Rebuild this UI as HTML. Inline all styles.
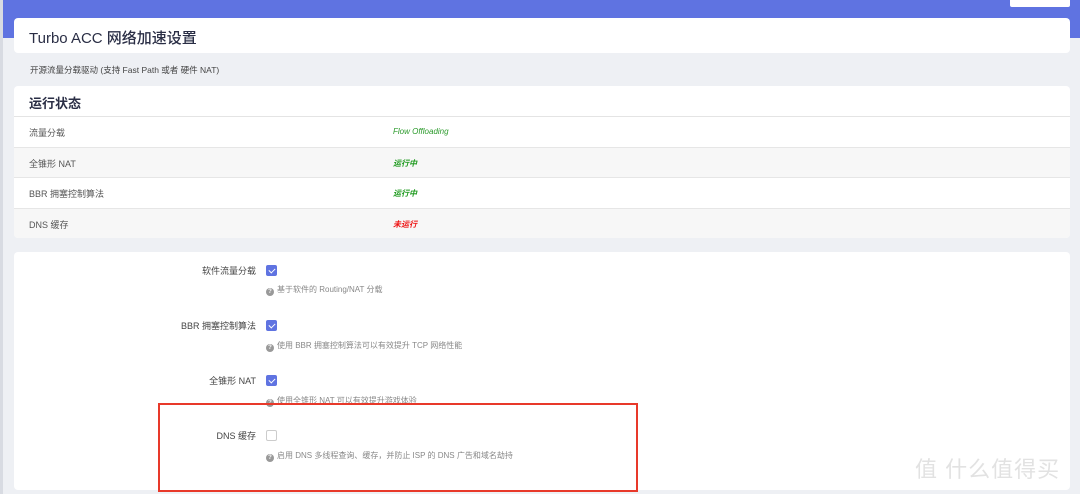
<!DOCTYPE html>
<html><head><meta charset="utf-8"><style>
*{margin:0;padding:0;box-sizing:border-box}
body{width:1080px;height:494px;background:#eef0f4;font-family:"Liberation Sans","Noto Sans CJK SC",sans-serif;position:relative;overflow:hidden;color:#333}
.hdr{position:absolute;left:0;top:0;width:1080px;height:38px;background:#5f73e1}
.lstrip{position:absolute;left:0;top:0;width:3px;height:494px;background:#d8dbe2}
.btn{position:absolute;left:1010px;top:-3px;width:60px;height:10px;background:#fff;border-radius:2px}
.card{position:absolute;left:14px;width:1056px;background:#fff;border-radius:4px}
.t1{top:18px;height:35px;font-size:15px;color:#2a2e45;padding:9px 15px;font-weight:500}
.sub{position:absolute;left:30px;top:64px;font-size:8.5px;color:#444}
.st{top:86px;height:152px;overflow:hidden}
.st h2{font-size:13px;color:#2a2e45;padding:7px 15px;height:31px;border-bottom:1px solid #e4e4e4}
.row{height:30.5px;border-bottom:1px solid #e6e6e6;font-size:9px;color:#555;position:relative;padding:9px 15px}
.row.g{background:#f7f7f7}
.row i{position:absolute;left:379px;top:10px;font-size:8px;font-weight:bold}
.set{top:252px;height:238px}
.lab{position:absolute;font-size:9px;color:#444;right:814px;text-align:right;white-space:nowrap}
.cb{position:absolute;left:252px;width:11px;height:11px;border-radius:2px;background:#5f73e1}
.cb:after{content:"";position:absolute;left:3.5px;top:1.5px;width:3px;height:5px;border:solid #fff;border-width:0 1.5px 1.5px 0;transform:rotate(45deg)}
.cb.off{background:#fff;border:1px solid #ccc}.cb.off:after{display:none}
.help{position:absolute;left:252px;font-size:8px;color:#888;white-space:nowrap}
.q{display:inline-block;width:8px;height:8px;border-radius:50%;background:#999;color:#fff;font-size:6px;line-height:8px;text-align:center;font-weight:bold;margin-right:3px;vertical-align:-1px}
.red{position:absolute;left:158px;top:403px;width:480px;height:89px;border:2px solid #e8392a}
.wm{position:absolute;left:915px;top:452px;font-size:22px;color:#e2e2e2;letter-spacing:1px}
</style></head><body>
<div class="hdr"></div><div class="lstrip"></div><div class="btn"></div>
<div class="card t1">Turbo ACC 网络加速设置</div>
<div class="sub">开源流量分载驱动 (支持 Fast Path 或者 硬件 NAT)</div>
<div class="card st"><h2>运行状态</h2>
<div class="row">流量分载<i style="color:#2b9a2b;font-weight:normal">Flow Offloading</i></div>
<div class="row g">全锥形 NAT<i style="color:#1e9a1e">运行中</i></div>
<div class="row">BBR 拥塞控制算法<i style="color:#1e9a1e">运行中</i></div>
<div class="row g" style="border:none">DNS 缓存<i style="color:#ee1111">未运行</i></div>
</div>
<div class="card set">
<div class="lab" style="top:12px">软件流量分载</div><div class="cb" style="top:13px"></div>
<div class="help" style="top:32px"><span class="q">?</span>基于软件的 Routing/NAT 分载</div>
<div class="lab" style="top:67px">BBR 拥塞控制算法</div><div class="cb" style="top:68px"></div>
<div class="help" style="top:88px"><span class="q">?</span>使用 BBR 拥塞控制算法可以有效提升 TCP 网络性能</div>
<div class="lab" style="top:122px">全锥形 NAT</div><div class="cb" style="top:123px"></div>
<div class="help" style="top:143px"><span class="q">?</span>使用全锥形 NAT 可以有效提升游戏体验</div>
<div class="lab" style="top:177px">DNS 缓存</div><div class="cb off" style="top:178px"></div>
<div class="help" style="top:198px"><span class="q">?</span>启用 DNS 多线程查询、缓存，并防止 ISP 的 DNS 广告和域名劫持</div>
</div>
<div class="red"></div>
<div class="wm">值 什么值得买</div>
</body></html>
